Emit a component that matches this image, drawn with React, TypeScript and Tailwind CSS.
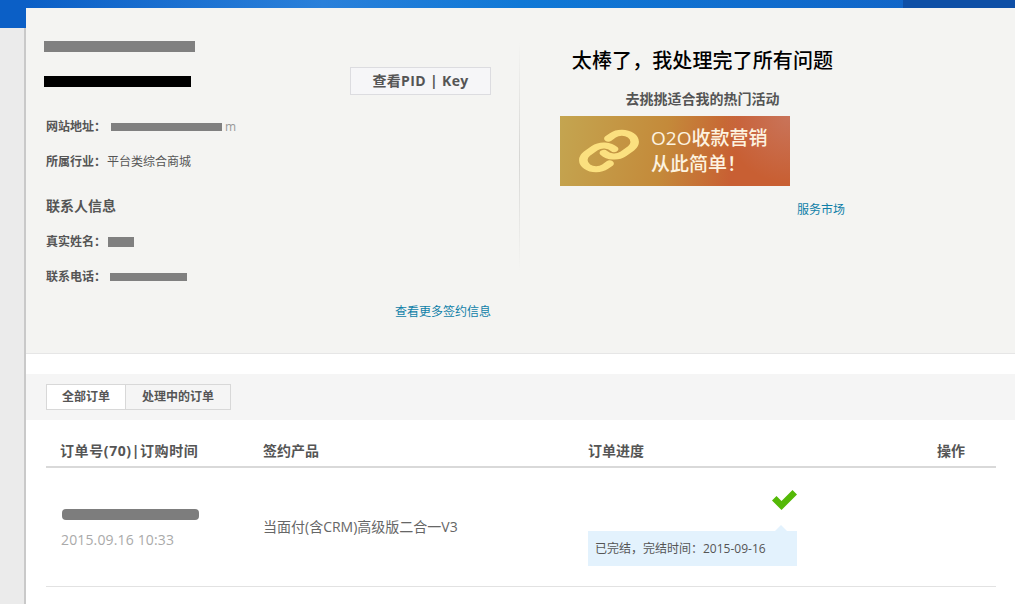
const cjk = "font-['Open_Sans','Noto_Sans_CJK_SC',sans-serif]";

function Field({ label, children }: { label: string; children: React.ReactNode }) {
  return (
    <div className="flex h-5 items-center text-xs text-[#555]">
      <span className="font-bold">{label}</span>
      {children}
    </div>
  );
}

function LinkIcon() {
  return (
    <svg width="62" height="44" viewBox="0 0 24 24" preserveAspectRatio="none" fill="none" stroke="#fbe07f" strokeWidth="3.3" strokeLinecap="round">
      <path d="M10 13a5 5 0 0 0 7.54.54l3-3a5 5 0 0 0-7.07-7.07l-1.72 1.71" />
      <path d="M14 11a5 5 0 0 0-7.54-.54l-3 3a5 5 0 0 0 7.07 7.07l1.71-1.71" />
    </svg>
  );
}

export default function App() {
  return (
    <div className={`flex h-[604px] w-[1015px] overflow-hidden bg-white ${cjk}`}>
      <div className="flex w-[26px] shrink-0 flex-col">
        <div className="h-7 bg-[#0b5fc6]" />
        <div className="flex-1 border-r-2 border-[#c9c9c9] bg-[#ebebeb]" />
      </div>

      <div className="flex min-w-0 flex-1 flex-col">
        <div className="flex h-2 bg-[linear-gradient(90deg,#0b5fc6,#2a80da_30%,#0f78d6_50%,#1160c4)]">
          <div className="flex-1" />
          <div className="w-28 bg-[#0e4fa6]" />
        </div>

        <div className="flex h-[346px] border-b border-[#e6e6e6] bg-[#f4f4f2] pt-[33px]">
          <div className="w-[465px] shrink-0 pl-5">
            <div className="flex h-[54px] items-end justify-between">
              <div className="-ml-0.5 flex h-full flex-col gap-6">
                <div className="h-[11px] w-[151px] bg-[#808080]" />
                <div className="h-[11px] w-[147px] bg-black" />
              </div>
              <button className="flex h-7 w-[141px] items-center justify-center border border-[#dcdce0] bg-[#f6f6f8] text-sm font-bold tracking-[0.35px] text-[#555]">
                查看PID | Key
              </button>
            </div>
            <div className="mt-[22px] flex flex-col gap-[15px]">
              <Field label="网站地址：">
                <div className="ml-[5px] h-2 w-[111px] bg-[#808080]" />
                <span className="ml-[3px] font-normal text-[#999]">m</span>
              </Field>
              <Field label="所属行业：">
                <span className="ml-[1px]">平台类综合商城</span>
              </Field>
              <div className="mt-[9px] mb-px flex h-5 items-center text-sm font-bold text-[#555]">联系人信息</div>
              <Field label="真实姓名：">
                <div className="ml-[2px] h-2.5 w-[26px] bg-[#808080]" />
              </Field>
              <Field label="联系电话：">
                <div className="ml-1 h-2 w-[77px] bg-[#808080]" />
              </Field>
              <div className="flex h-5 items-center justify-end text-xs text-[#0f7fa8]">查看更多签约信息</div>
            </div>
          </div>

          <div className="ml-7 h-[230px] w-px bg-gradient-to-b from-[#f4f4f2] via-[#d6d6d4] to-[#f4f4f2]" />

          <div className="ml-10 flex w-[285px] flex-col">
            <h2 className="mt-[2px] h-9 text-center text-xl leading-9 font-medium tracking-[0.1px] text-black">太棒了，我处理完了所有问题</h2>
            <p className="mt-[9px] h-[22px] text-center text-sm leading-[22px] font-bold text-[#555]">去挑挑适合我的热门活动</p>
            <div className="mt-1.5 flex h-[70px] w-[230px] items-center gap-[11px] bg-[radial-gradient(circle_at_100%_0%,#c9745a,transparent_28%),linear-gradient(100deg,#c4a550,#c48a3a_45%,#c85f33_75%)] pl-[18px]">
              <LinkIcon />
              <div className="text-[19px] leading-[26px] font-medium text-[#fdf3e0]">
                <div>O2O收款营销</div>
                <div>从此简单！</div>
              </div>
            </div>
            <div className="mt-4 text-right text-xs text-[#0f7fa8]">服务市场</div>
          </div>
        </div>

        <div className="h-5 shrink-0" />

        <div className="flex h-[46px] items-start bg-[#f5f5f5] pt-2.5 pl-5">
          <div className="flex h-[26px] border border-[#d8d8d8] text-xs font-bold text-[#555]">
            <div className="flex w-[79px] items-center justify-center border-r border-[#d8d8d8] bg-white">全部订单</div>
            <div className="flex w-[104px] items-center justify-center">处理中的订单</div>
          </div>
        </div>

        <div className="ml-5 w-[950px]">
          <div className="mt-[17px] grid h-[31px] grid-cols-[202px_325px_349px_1fr] border-b-2 border-[#d9d9d9] pl-[15px] text-sm leading-7 font-bold text-[#555]">
            <span className="-ml-px tracking-[0.6px]">订单号(70)|订购时间</span>
            <span>签约产品</span>
            <span>订单进度</span>
            <span>操作</span>
          </div>

          <div className="grid h-[119px] grid-cols-[202px_325px_1fr] border-b border-[#e2e2e2] pl-[15px]">
            <div className="flex flex-col pt-[41px]">
              <div className="ml-px h-[11px] w-[137px] rounded-sm bg-[#7d7d7d]" />
              <div className="mt-[10px] text-sm leading-5 tracking-[0.15px] text-[#aaa]">2015.09.16 10:33</div>
            </div>
            <div className="flex items-center text-sm text-[#666]">当面付(含CRM)高级版二合一V3</div>
            <div className="relative w-[209px] pt-[22px]">
              <svg className="ml-[184px]" width="25" height="20" viewBox="0 0 25 20">
                <path d="M0 10.5 L4.5 6 L9.5 11 L20.5 0 L25 4.5 L9.5 20 Z" fill="#54b907" />
              </svg>
              <div className="absolute top-[57px] left-[186px] h-0 w-0 border-x-[7px] border-b-[7px] border-x-transparent border-b-[#e3f2fd]" />
              <div className="mt-[21px] flex h-[35px] items-center bg-[#e3f2fd] pl-[7px] text-xs text-[#555]">已完结，完结时间：2015-09-16</div>
            </div>
          </div>
        </div>
      </div>
    </div>
  );
}
